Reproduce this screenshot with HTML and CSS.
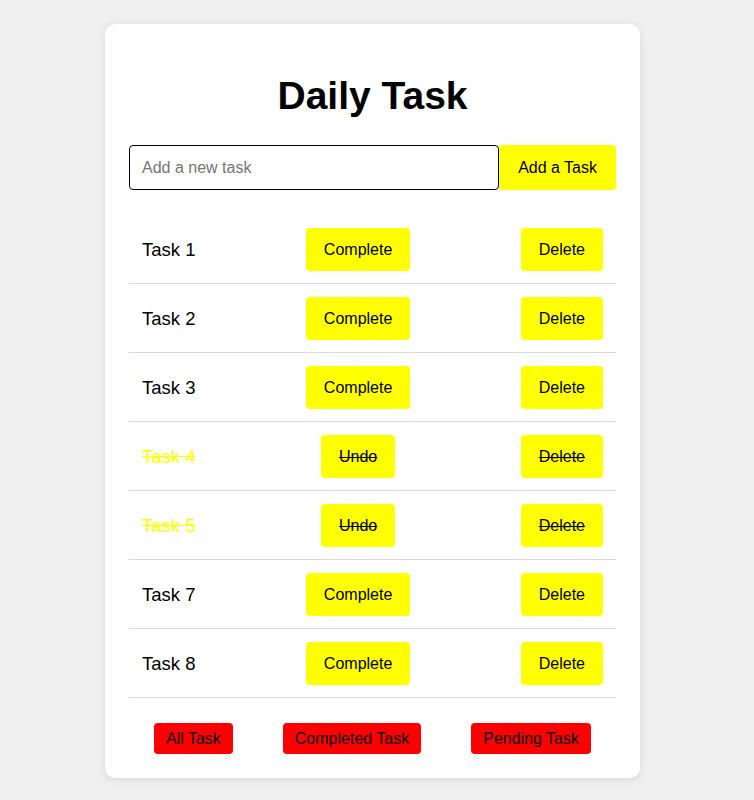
FILE: index.html
```html
<!DOCTYPE html>
<html lang="en">
<head>
<meta charset="utf-8">
<title>Daily Task</title>
<link rel="stylesheet" href="styles.css">
</head>
<body>
<main class="card">
  <h1 class="title">Daily Task</h1>
  <form class="add-form">
    <input class="add-input" type="text" placeholder="Add a new task">
    <button class="btn btn-yellow add-btn" type="button">Add a Task</button>
  </form>
  <ul class="task-list">
    <li class="task"><span class="task-name">Task 1</span><button class="btn btn-yellow">Complete</button><button class="btn btn-yellow">Delete</button></li>
    <li class="task"><span class="task-name">Task 2</span><button class="btn btn-yellow">Complete</button><button class="btn btn-yellow">Delete</button></li>
    <li class="task"><span class="task-name">Task 3</span><button class="btn btn-yellow">Complete</button><button class="btn btn-yellow">Delete</button></li>
    <li class="task done"><span class="task-name">Task 4</span><button class="btn btn-yellow">Undo</button><button class="btn btn-yellow">Delete</button></li>
    <li class="task done"><span class="task-name">Task 5</span><button class="btn btn-yellow">Undo</button><button class="btn btn-yellow">Delete</button></li>
    <li class="task"><span class="task-name">Task 7</span><button class="btn btn-yellow">Complete</button><button class="btn btn-yellow">Delete</button></li>
    <li class="task"><span class="task-name">Task 8</span><button class="btn btn-yellow">Complete</button><button class="btn btn-yellow">Delete</button></li>
  </ul>
  <div class="filters">
    <button class="btn btn-red">All Task</button>
    <button class="btn btn-red">Completed Task</button>
    <button class="btn btn-red">Pending Task</button>
  </div>
</main>
</body>
</html>
```
FILE: styles.css
```css
* { box-sizing: border-box; }

html, body {
  margin: 0;
  padding: 0;
  background: #f0f0f0;
  font-family: "Liberation Sans", Arial, sans-serif;
  color: #000;
}

body {
  padding: 24px 0 22px;
}

.card {
  width: 535px;
  margin-left: 105px;
  background: #fff;
  border-radius: 10px;
  padding: 24px;
  box-shadow: 0 2px 10px rgba(0, 0, 0, 0.1);
}

.title {
  margin: 25px 0 27px;
  font-size: 39px;
  line-height: 45px;
  font-weight: bold;
  text-align: center;
}

.add-form {
  display: flex;
  margin: 0;
}

.add-input {
  flex: 1;
  height: 45px;
  padding: 0 12px;
  border: 1px solid #000;
  border-radius: 4px;
  font-family: inherit;
  font-size: 16px;
  color: #000;
  outline: none;
}

.add-input::placeholder {
  color: #757575;
}

.btn {
  border: none;
  border-radius: 4px;
  font-family: inherit;
  font-size: 16px;
  color: #000;
  cursor: pointer;
}

.btn-yellow {
  background: #ffff00;
  padding: 12px 18px;
  line-height: 19px;
}

.add-btn {
  height: 45px;
  padding: 0 19px;
}

.task-list {
  list-style: none;
  margin: 25px 0 0;
  padding: 0;
}

.task {
  display: flex;
  justify-content: space-between;
  align-items: center;
  padding: 12.5px 13px;
  border-bottom: 1px solid #d9d9d9;
}

.task-name {
  font-size: 18.5px;
  line-height: 21px;
}

.task.done .task-name {
  color: #ffff00;
  text-decoration: line-through;
}

.task.done .btn {
  text-decoration: line-through;
}

.filters {
  display: flex;
  justify-content: space-around;
  margin-top: 25px;
}

.btn-red {
  background: #ff0000;
  padding: 6px 12px;
  line-height: 19px;
}
```
